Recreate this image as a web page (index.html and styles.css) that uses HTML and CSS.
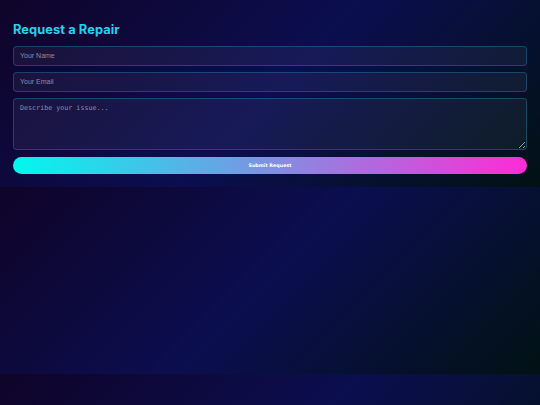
FILE: index.html
```html
<!DOCTYPE html>
<html lang="en">
<head>
<meta charset="utf-8">
<title>Request a Repair</title>
<link rel="stylesheet" href="styles.css">
</head>
<body>
<section class="repair">
  <h2 class="repair-title">Request a Repair</h2>
  <form class="repair-form">
    <input class="field field-line" type="text" placeholder="Your Name">
    <input class="field field-line" type="email" placeholder="Your Email">
    <textarea class="field field-area" placeholder="Describe your issue..."></textarea>
    <button class="submit" type="button">Submit Request</button>
  </form>
</section>
</body>
</html>
```
FILE: styles.css
```css
body {
  margin: 0;
  background: linear-gradient(135deg, #0f0429 0%, #0b0e4f 50%, #011214 100%);
}

.repair {
  padding: 13px;
}

.repair-title {
  margin: 9px 0 9px;
  font-family: Inter, "Liberation Sans", sans-serif;
  font-weight: 700;
  font-size: 12.8px;
  line-height: 15px;
  letter-spacing: 0.1px;
  color: #22d3ee;
}

.repair-form {
  display: flex;
  flex-direction: column;
  gap: 6.5px;
  margin: 0;
}

.field {
  box-sizing: border-box;
  display: block;
  width: 100%;
  margin: 0;
  padding: 5px 6px;
  font-family: "Liberation Sans", Arial, sans-serif;
  font-size: 7px;
  color: #e6e8f5;
  background: rgba(255, 255, 255, 0.05);
  border: 1px solid rgba(40, 170, 240, 0.3);
  border-radius: 4px;
  outline: none;
}

.field-line {
  height: 19.5px;
}

.field::placeholder {
  color: #8a8da6;
}

.field-area {
  height: 52px;
  font-family: "DejaVu Sans Mono", monospace;
  font-size: 6.7px;
  line-height: 8px;
  padding-top: 5px;
}

.submit {
  display: block;
  height: 17.5px;
  margin: 0;
  padding: 0;
  border: 0;
  border-radius: 9px;
  background: linear-gradient(90deg, #00f8ee 0%, #ff2ad6 100%);
  color: #ffffff;
  font-family: "DejaVu Sans", sans-serif;
  font-weight: 700;
  font-size: 4.8px;
  cursor: pointer;
}
```
